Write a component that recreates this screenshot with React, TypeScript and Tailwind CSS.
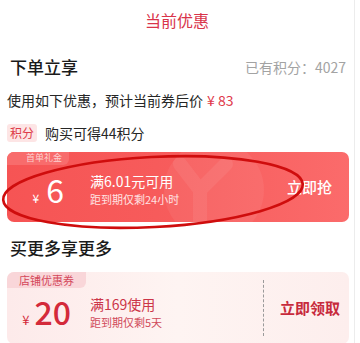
import React from 'react';

const FONT = { fontFamily: '"Noto Sans CJK SC", "Noto Sans", sans-serif' };

// Hand-drawn annotation ring over the first coupon.
function Ring() {
  return (
    <svg className="pointer-events-none absolute left-0 top-0" width="360" height="343" viewBox="0 0 360 343">
      <ellipse
        cx="153"
        cy="192"
        rx="150"
        ry="35"
        transform="rotate(-3 153 192)"
        fill="none"
        stroke="#cf0d0d"
        strokeWidth="2.6"
      />
    </svg>
  );
}

function Watermark() {
  return (
    <svg className="absolute left-[145px] top-0" width="120" height="70" viewBox="0 0 120 70">
      <circle cx="62" cy="38" r="50" fill="#ffffff" fillOpacity="0.06" />
      <path d="M28 12 L48 38 L74 12 M48 38 L48 70" stroke="#ffffff" strokeOpacity="0.07" strokeWidth="14" fill="none" strokeLinecap="round" />
    </svg>
  );
}

export default function App() {
  return (
    <div className="relative h-[343px] w-[360px] overflow-hidden bg-white" style={FONT}>
      <div className="h-full w-[355px] border-r border-[#ececec]">
        <div className="flex h-[40px] items-center justify-center text-[16px] text-[#d9344a]">当前优惠</div>

        <div className="mt-[15px] flex h-[24px] items-center justify-between pl-[10px] pr-[8px]">
          <span className="text-[17px] font-medium text-[#1a1a1a]">下单立享</span>
          <span className="text-[14px] text-[#a3a3a3]">已有积分：4027</span>
        </div>

        <div className="mt-[10px] flex h-[22px] items-center pl-[7px] text-[14px] text-[#262626]">
          使用如下优惠，预计当前券后价<span className="ml-[4px] text-[#e0394a]">¥ 83</span>
        </div>

        <div className="mt-[12px] flex h-[20px] items-center pl-[7px]">
          <span className="rounded-[3px] bg-[#fde5e5] px-[3px] text-[12px] leading-[18px] text-[#dd3d4a]">积分</span>
          <span className="ml-[8px] text-[14px] text-[#262626]">购买可得44积分</span>
        </div>

        {/* first-order coupon */}
        <div className="relative ml-[7px] mt-[9px] flex h-[70px] w-[342px] items-center overflow-hidden rounded-[7px] bg-gradient-to-r from-[#f65454] via-[#f75c5c] to-[#fb6b6b]">
          <Watermark />
          <div className="absolute left-0 top-0 h-[13px] w-[62px] rounded-br-[6px] bg-[#f86c6c] pl-[19px] text-[9px] leading-[12px] text-[#fcd0d0]">首单礼金</div>
          <div className="relative flex w-[83px] items-baseline justify-end pr-[26px] pt-[6px] text-white">
            <span className="text-[12px]">¥</span>
            <span className="ml-[7px] text-[32px] leading-none">6</span>
          </div>
          <div className="relative flex flex-col pt-[4px] text-white">
            <span className="text-[14px] leading-[20px]">满6.01元可用</span>
            <span className="text-[11px] leading-[16px] text-[#ffe3e3]">距到期仅剩24小时</span>
          </div>
          <span className="relative ml-auto mr-[17px] text-[15px] font-medium text-white">立即抢</span>
        </div>

        <div className="mt-[14px] flex h-[24px] items-center pl-[10px] text-[17px] font-medium text-[#1a1a1a]">买更多享更多</div>

        {/* store coupon */}
        <div className="relative ml-[7px] mt-[12px] flex h-[72px] w-[342px] items-center rounded-[7px] bg-gradient-to-r from-[#fdeaea] via-[#fef4f2] to-[#fdeeed]">
          <div className="absolute left-0 top-0 h-[16px] w-[79px] rounded-br-[6px] rounded-tl-[7px] bg-[#f9d6d9] text-center text-[11px] leading-[16px] text-[#d4475a]">店铺优惠券</div>
          <div className="flex w-[83px] items-baseline justify-end pr-[19px] pt-[8px] text-[#d42a3a]">
            <span className="text-[13px]">¥</span>
            <span className="ml-[5px] text-[32px] font-medium leading-none">20</span>
          </div>
          <div className="flex flex-col pt-[8px]">
            <span className="text-[14px] leading-[20px] text-[#cc3548]">满169使用</span>
            <span className="text-[11px] leading-[16px] text-[#d04a5a]">距到期仅剩5天</span>
          </div>
          <div className="ml-auto h-[56px] border-l border-dashed border-[#9a9a9a]" />
          <span className="ml-[16px] mr-[9px] text-[15px] font-bold text-[#c72a3c]">立即领取</span>
        </div>
      </div>
      <Ring />
    </div>
  );
}
